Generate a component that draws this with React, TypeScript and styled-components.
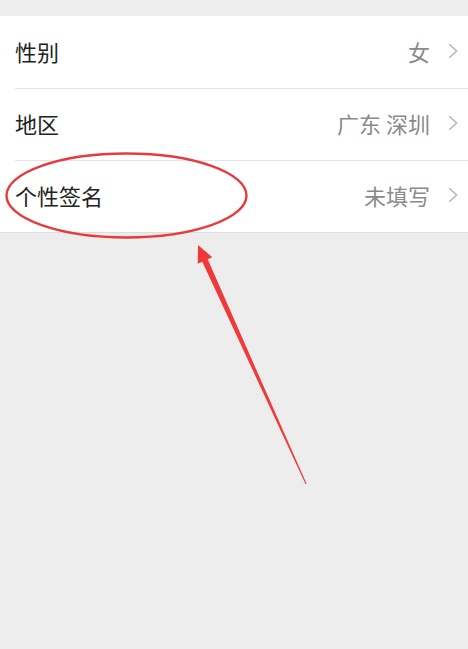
import React from "react";
import styled, { createGlobalStyle } from "styled-components";

const GlobalStyle = createGlobalStyle`
  html, body {
    margin: 0;
    padding: 0;
    background: #ededed;
  }
  body {
    font-family: "Noto Sans CJK SC", "Noto Sans", sans-serif;
  }
`;

type Item = { label: string; value: string };

const items: Item[] = [
  { label: "性别", value: "女" },
  { label: "地区", value: "广东 深圳" },
  { label: "个性签名", value: "未填写" },
];

const Chevron: React.FC = () => (
  <svg width="10" height="16" viewBox="0 0 10 16">
    <path d="M1.2 1.2 L8.6 8 L1.2 14.8" fill="none" stroke="#b4b4b4" strokeWidth="1.5" />
  </svg>
);

const App: React.FC = () => (
  <Page>
    <GlobalStyle />
    <List>
      {items.map((item, i) => (
        <Row key={item.label} first={i === 0}>
          <Label>{item.label}</Label>
          <Value>{item.value}</Value>
          <Chevron />
        </Row>
      ))}
    </List>
    <Annotation width="468" height="649" viewBox="0 0 468 649">
      <ellipse cx="126.5" cy="195.5" rx="120" ry="42" fill="none" stroke="#e83a3a" strokeWidth="2.4" />
      <polygon
        points="198,245 212.3,257.2 207.7,259.3 306.6,483.8 305.6,484.2 202.3,261.7 197.7,263.8"
        fill="#f03a3a"
      />
    </Annotation>
  </Page>
);

export default App;

// styled

const Page = styled.div`
  position: relative;
  width: 468px;
  height: 649px;
  padding-top: 16px;
  box-sizing: border-box;
  background: #ededed;
  overflow: hidden;
`;

const List = styled.div`
  background: #ffffff;
  border-bottom: 1px solid #dedede;
`;

const Row = styled.div<{ first: boolean }>`
  display: flex;
  align-items: center;
  height: 72px;
  margin-left: 15px;
  padding-right: 10px;
  padding-bottom: 3px;
  border-top: ${(props) => (props.first ? "none" : "1px solid #e5e5e5")};
  box-sizing: border-box;
`;

const Label = styled.span`
  flex: 1;
  font-size: 22px;
  color: #222222;
`;

const Value = styled.span`
  font-size: 22px;
  color: #8a8a8a;
  margin-right: 18px;
`;

const Annotation = styled.svg`
  position: absolute;
  left: 0;
  top: 0;
  pointer-events: none;
`;
